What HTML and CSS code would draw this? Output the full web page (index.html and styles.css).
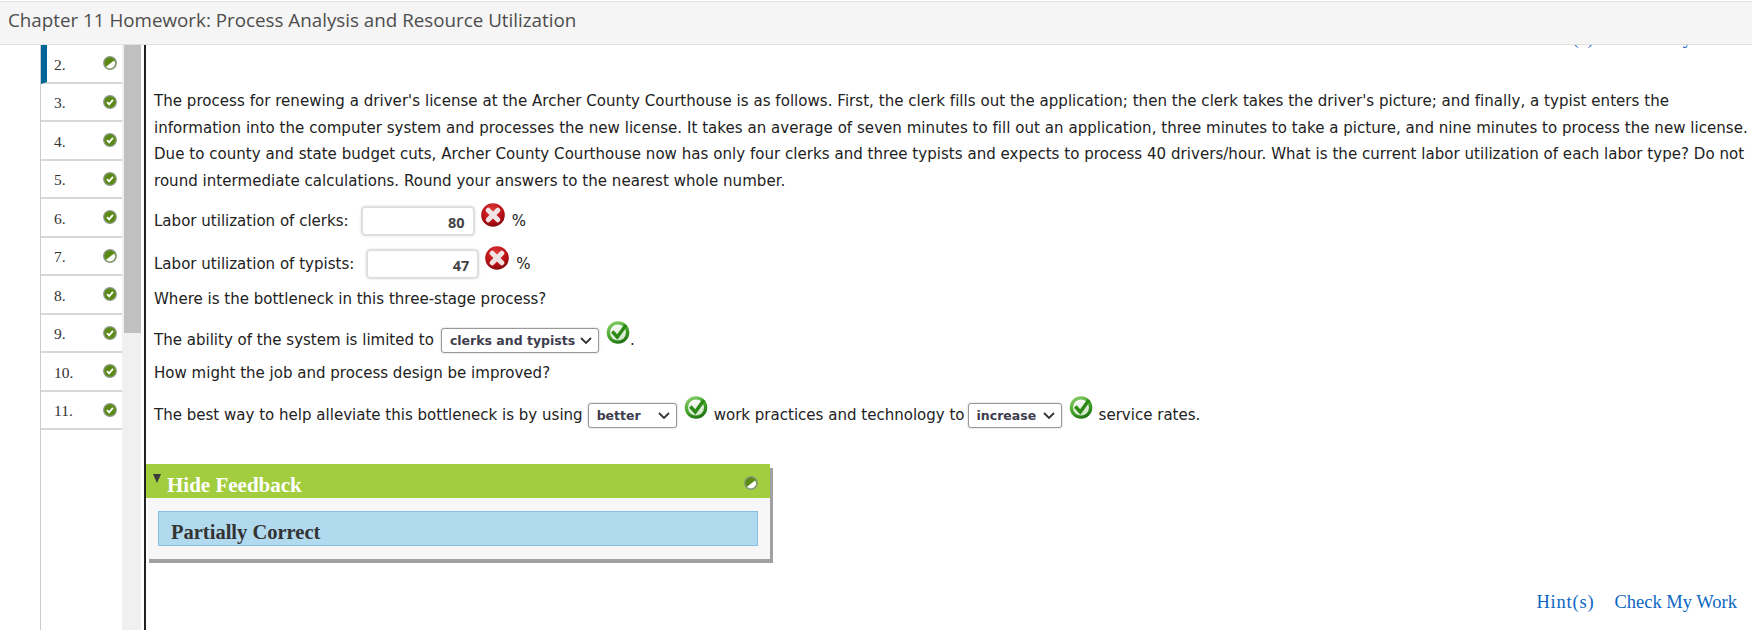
FILE: index.html
```html
<!DOCTYPE html>
<html lang="en">
  <head>
    <meta charset="utf-8" />
    <title>Chapter 11 Homework</title>
    <link rel="stylesheet" href="styles.css">
  </head>
  <body>
    <svg class="icon-defs" width="0" height="0">
      <defs>
        <radialGradient id="redball" cx="45%" cy="30%" r="75%">
          <stop offset="0" stop-color="#e23a3c" />
          <stop offset="0.65" stop-color="#b50f14" />
          <stop offset="1" stop-color="#740a0c" />
        </radialGradient>
        <linearGradient id="greenring" x1="0.2" y1="0" x2="0.7" y2="1">
          <stop offset="0" stop-color="#8fd070" />
          <stop offset="0.5" stop-color="#46a82c" />
          <stop offset="1" stop-color="#1c6e10" />
        </linearGradient>
        <linearGradient id="greeninner" x1="0" y1="0" x2="0.3" y2="1">
          <stop offset="0" stop-color="#ffffff" />
          <stop offset="1" stop-color="#d4e6cc" />
        </linearGradient>
        <symbol id="ok" viewBox="0 0 16 16">
          <circle cx="8" cy="8" r="7.2" fill="#5a8a14" stroke="#8c9a84" stroke-width="1.4" />
          <path d="M4.600 8.200l2.400 2.500 4.400-5.200" fill="none" stroke="#fff" stroke-width="2.200" />
        </symbol>
        <symbol id="partial" viewBox="0 0 16 16">
          <circle cx="8" cy="8" r="7.2" fill="#5a8a14" stroke="#8c9a84" stroke-width="1.400" />
          <path d="M3.400 12.400L12.600 5.200A7 7 0 0 1 14 8a6.400 6.400 0 0 1-6 6.300a6 6 0 0 1-4.600-1.900z" fill="#fff" />
        </symbol>
        <symbol id="wrong" viewBox="0 0 24 24">
          <circle cx="12" cy="12" r="11.800" fill="url(#redball)" />
          <path d="M7.200 7.200l9.600 9.600M16.800 7.200l-9.600 9.600" stroke="#efe3e3" stroke-width="5" stroke-linecap="round" />
        </symbol>
        <symbol id="right" viewBox="0 0 24 24">
          <circle cx="12" cy="12.500" r="11.300" fill="url(#greenring)" />
          <circle cx="12" cy="12.500" r="8" fill="url(#greeninner)" />
          <path d="M6.300 11.500l5 5.500 8.700-12" fill="none" stroke="#2c8a14" stroke-width="3.400" />
        </symbol>
      </defs>
    </svg>

    <header class="page-title">Chapter 11 Homework: Process Analysis and Resource Utilization</header>

    <div class="layout">
      <nav class="question-nav">
        <ul class="question-list">
          <li class="question current"><span>2.</span><svg class="dot"><use href="#partial" /></svg></li>
          <li class="question"><span>3.</span><svg class="dot"><use href="#ok" /></svg></li>
          <li class="question"><span>4.</span><svg class="dot"><use href="#ok" /></svg></li>
          <li class="question"><span>5.</span><svg class="dot"><use href="#ok" /></svg></li>
          <li class="question"><span>6.</span><svg class="dot"><use href="#ok" /></svg></li>
          <li class="question"><span>7.</span><svg class="dot"><use href="#partial" /></svg></li>
          <li class="question"><span>8.</span><svg class="dot"><use href="#ok" /></svg></li>
          <li class="question"><span>9.</span><svg class="dot"><use href="#ok" /></svg></li>
          <li class="question"><span>10.</span><svg class="dot"><use href="#ok" /></svg></li>
          <li class="question"><span>11.</span><svg class="dot"><use href="#ok" /></svg></li>
        </ul>
        <div class="nav-scroll"><div class="nav-thumb"></div></div>
      </nav>

      <main class="question-body">
        <div class="links links-top"><a href="#">Hint(s)</a><a href="#">Check My Work</a></div>

        <p class="prompt">The process for renewing a driver's license at the Archer County Courthouse is as follows. First, the clerk fills out the application; then the clerk takes the driver's picture; and finally, a typist enters the<br>
        information into the computer system and processes the new license. It takes an average of seven minutes to fill out an application, three minutes to take a picture, and nine minutes to process the new license.<br>
        Due to county and state budget cuts, Archer County Courthouse now has only four clerks and three typists and expects to process 40 drivers/hour. What is the current labor utilization of each labor type? Do not<br>
        round intermediate calculations. Round your answers to the nearest whole number.</p>

        <div class="answer-row row-clerks">
          Labor utilization of clerks:
          <input class="num-input clerks" type="text" value="80" />
          <svg class="mark wrong-mark"><use href="#wrong" /></svg>
          <span class="unit">%</span>
        </div>
        <div class="answer-row row-typists">
          Labor utilization of typists:
          <input class="num-input typists" type="text" value="47" />
          <svg class="mark wrong-mark"><use href="#wrong" /></svg>
          <span class="unit">%</span>
        </div>
        <div class="answer-row row-where">Where is the bottleneck in this three-stage process?</div>
        <div class="answer-row row-ability">
          The ability of the system is limited to
          <span class="fake-select sel-clerks">clerks and typists<svg class="chev" viewBox="0 0 12 7"><path d="M1 1l5 5 5-5" /></svg></span>
          <svg class="mark"><use href="#right" /></svg><span class="stop">.</span>
        </div>
        <div class="answer-row row-how">How might the job and process design be improved?</div>
        <div class="answer-row row-best">
          The best way to help alleviate this bottleneck is by using
          <span class="fake-select sel-better">better<svg class="chev" viewBox="0 0 12 7"><path d="M1 1l5 5 5-5" /></svg></span>
          <svg class="mark"><use href="#right" /></svg>
          <span class="after">work practices and technology to</span>
          <span class="fake-select sel-increase">increase<svg class="chev" viewBox="0 0 12 7"><path d="M1 1l5 5 5-5" /></svg></span>
          <svg class="mark"><use href="#right" /></svg>
          <span class="after">service rates.</span>
        </div>

        <section class="feedback">
          <div class="feedback-head">
            <span class="caret"></span>
            <span class="feedback-title">Hide Feedback</span>
            <svg class="dot feedback-dot"><use href="#partial" /></svg>
          </div>
          <div class="feedback-body">
            <div class="feedback-msg">Partially Correct</div>
          </div>
        </section>

        <div class="links links-bottom"><a href="#">Hint(s)</a><a href="#">Check My Work</a></div>
      </main>
    </div>
  </body>
</html>
```

FILE: styles.css
```css
html, body {
  margin: 0;
  height: 630px;
  overflow: hidden;
  background: #fff;
}

.icon-defs {
  display: block;
  height: 0;
}

.page-title {
  box-sizing: border-box;
  height: 44px;
  margin-top: 1px;
  padding: 2px 0 0 8px;
  background: #f5f5f5;
  border-top: 1px solid #e2e2e2;
  border-bottom: 1px solid #e0e0e0;
  font-family: "Open Sans", sans-serif;
  font-size: 18.8px;
  line-height: 32px;
  color: #4d4d4d;
}

.layout {
  display: flex;
  height: 585px;
  overflow: hidden;
}

/* question list on the left */
.question-nav {
  display: flex;
  width: 103px;
  margin-left: 40px;
  border-left: 1px solid #ccc;
}

.question-list {
  list-style: none;
  margin: 0;
  padding: 0;
  width: 81px;
}

.question {
  box-sizing: border-box;
  display: flex;
  align-items: center;
  height: 38.5px;
  padding: 0 5px 0 13px;
  border-bottom: 2px solid #d8d8d8;
  font-family: "Liberation Serif", serif;
  font-size: 15.5px;
  color: #333;
}

.question span {
  flex: 1;
  padding-top: 3px;
}

.question.current {
  border-left: 6px solid #006699;
  padding-left: 7px;
}

.dot {
  width: 14px;
  height: 14px;
}

.nav-scroll {
  width: 19px;
  background: #f0f0f0;
}

.nav-thumb {
  width: 17px;
  height: 288px;
  margin-left: 2px;
  background: #c0c0c0;
}

/* question text and answers */
.question-body {
  flex: 1;
  min-width: 0;
  border-left: 2px solid #222;
  font-family: "DejaVu Sans", sans-serif;
  font-size: 15.04px;
  color: #222;
}

.links {
  display: flex;
  justify-content: flex-end;
  gap: 20px;
  padding-right: 15px;
  font-family: "Liberation Serif", serif;
  font-size: 18.5px;
  line-height: 24px;
}

.links a {
  color: #0b66c3;
  text-decoration: none;
}

.links a:first-child {
  letter-spacing: 0.8px;
}

.links-top {
  margin-top: -19px;
}

.links-bottom {
  margin-top: 31px;
}

.prompt {
  margin: 38px 0 0 8px;
  line-height: 26.5px;
  letter-spacing: 0.03px;
  white-space: nowrap;
}

.answer-row {
  display: flex;
  align-items: center;
  gap: 10px;
  padding-left: 8px;
  white-space: nowrap;
  height: 26px;
}

.row-clerks { margin-top: 14px; }
.row-typists { margin-top: 17px; }
.row-where { margin-top: 9px; }
.row-ability { margin-top: 15px; }
.row-how { margin-top: 7px; }
.row-best { margin-top: 16px; }

.num-input {
  box-sizing: border-box;
  height: 28px;
  margin-left: 3px;
  padding: 2px 8px 0 0;
  border: 1px solid #ddd;
  border-radius: 3px;
  box-shadow: 0 0 3px #aaa;
  background: #fff;
  font-family: "Open Sans", sans-serif;
  font-size: 14.5px;
  font-weight: 700;
  text-align: right;
  color: #444;
}

.num-input.clerks { width: 112px; }
.num-input.typists { width: 111px; }

.mark {
  flex: none;
  width: 24px;
  height: 24px;
  margin: -16px 0 0 -3px;
}

.wrong-mark {
  margin-top: -13px;
}

.unit {
  margin-left: -3px;
}

.stop {
  margin-left: -10px;
}

.fake-select {
  box-sizing: border-box;
  display: flex;
  align-items: center;
  justify-content: space-between;
  height: 25px;
  padding: 0 6px 0 8px;
  border: 1px solid #999;
  border-radius: 3px;
  box-shadow: 0 0 2px #bbb;
  font-size: 12.5px;
  font-weight: 700;
  color: #3d3d4d;
  background: #fff;
  margin-left: -5px;
}

.sel-clerks { width: 158px; margin-left: -3px; }
.sel-better { width: 89px; }
.sel-increase { width: 94px; margin-left: -7px; }

.chev {
  width: 12px;
  height: 7px;
  fill: none;
  stroke: #333;
  stroke-width: 1.8;
}

.after {
  margin-left: -4px;
}

/* feedback box */
.feedback {
  width: 624px;
  margin-top: 36px;
  box-shadow: 3px 4px 0 #a0a0a0;
}

.feedback-head {
  display: flex;
  align-items: flex-start;
  height: 34px;
  background: #a2cd3f;
}

.caret {
  width: 0;
  height: 0;
  margin: 10px 0 0 7px;
  border-left: 4px solid transparent;
  border-right: 4px solid transparent;
  border-top: 9px solid #3a3a3a;
}

.feedback-title {
  flex: 1;
  margin: 9px 0 0 6px;
  font-family: "Liberation Serif", serif;
  font-size: 21px;
  font-weight: 700;
  line-height: 24px;
  color: #fff;
}

.feedback-dot {
  margin: 12px 12px 0 0;
}

.feedback-body {
  margin-left: 2px;
  padding: 13px 12px 13px 10px;
  background: #f7f7f7;
}

.feedback-msg {
  box-sizing: border-box;
  height: 35px;
  padding: 8px 0 0 12px;
  background: #b2daee;
  border: 1px solid #86bfe0;
  font-family: "Liberation Serif", serif;
  font-size: 20.500px;
  font-weight: 700;
  line-height: 24px;
  color: #333;
}
```
